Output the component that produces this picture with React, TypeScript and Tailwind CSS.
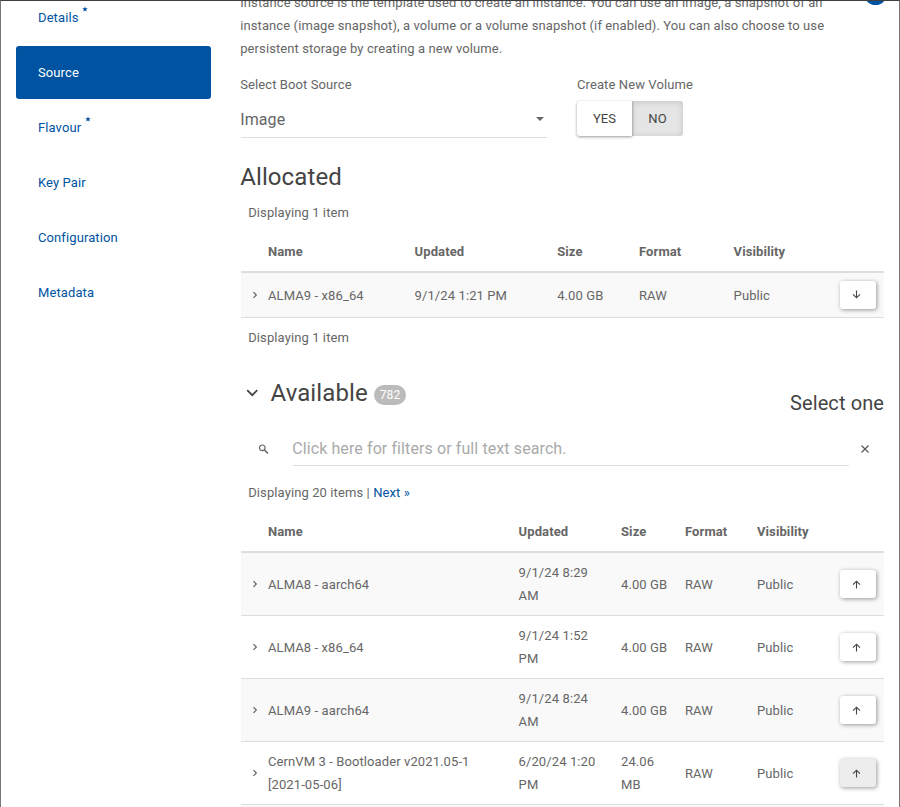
import React from "react";

const nav: [string, boolean][] = [["Details", true], ["Source", false], ["Flavour", true], ["Key Pair", false], ["Configuration", false], ["Metadata", false]];

const available = [
  { name: ["ALMA8 - aarch64"], updated: ["9/1/24 8:29", "AM"], size: ["4.00 GB"], hover: false },
  { name: ["ALMA8 - x86_64"], updated: ["9/1/24 1:52", "PM"], size: ["4.00 GB"], hover: false },
  { name: ["ALMA9 - aarch64"], updated: ["9/1/24 8:24", "AM"], size: ["4.00 GB"], hover: false },
  { name: ["CernVM 3 - Bootloader v2021.05-1", "[2021-05-06]"], updated: ["6/20/24 1:20", "PM"], size: ["24.06", "MB"], hover: true },
];

function Lines({ lines }: { lines: string[] }) {
  return <div className="whitespace-nowrap">{lines.map((l) => <div key={l}>{l}</div>)}</div>;
}

function Chevron() {
  return (
    <svg className="ml-[11px]" width="8" height="8" viewBox="0 0 8 8" fill="none" stroke="#666" strokeWidth="1.2">
      <path d="M1.5 1.2 4.3 4 1.5 6.8" />
    </svg>
  );
}

function RequiredStar() {
  return (
    <svg className="mb-[17px] ml-1" width="6" height="6" viewBox="0 0 6 6" fill="#0053a1">
      <path d="M3 .4 3.7 2.2 5.7 2.3 4.2 3.6 4.7 5.5 3 4.5 1.3 5.5 1.8 3.6.3 2.3 2.3 2.2Z" />
    </svg>
  );
}

function ArrowButton({ down, hover }: { down?: boolean; hover?: boolean }) {
  return (
    <button className={`flex h-7 w-9 items-center justify-center rounded-[3px] shadow-[1px_1px_4px_rgba(0,0,0,0.4)] ${hover ? "bg-[#ededed]" : "bg-white"}`}>
      <svg className={down ? "mr-[3px] mb-px rotate-180" : "mr-[3px]"} width="9" height="9" viewBox="0 0 9 9" fill="none" stroke="#444" strokeWidth="1.1">
        <path d="M4.5 8.4V1.2M1 4.7l3.5-3.5L8 4.7" />
      </svg>
    </button>
  );
}

export default function App() {
  return (
    <div className="relative flex h-[807px] w-[900px] overflow-hidden border-x border-t border-x-[#777] border-t-[#404040] bg-white font-[Roboto,sans-serif] text-[13px] leading-[23px] tracking-[0.1px] text-[#666]">
      <nav className="-mt-[10px] ml-[15px] flex w-[195px] shrink-0 flex-col gap-0.5">
        {nav.map(([label, star]) => (
          <div key={label} className={`flex h-[53px] items-center rounded-[3px] pl-[22px] ${label === "Source" ? "bg-[#0053a1] text-white" : "text-[#0053a1]"}`}>
            {label}{star && <RequiredStar />}
          </div>
        ))}
      </nav>
      <main className="-mt-[10px] ml-[30px] w-[643px] shrink-0">
        <p className="-ml-[0.8px] whitespace-nowrap">Instance source is the template used to create an instance. You can use an image, a snapshot of an<br />instance (image snapshot), a volume or a volume snapshot (if enabled). You can also choose to use<br />persistent storage by creating a new volume.</p>
        <div className="mt-[13px] flex h-[64px]">
          <div className="w-[306px]">
            <div className="-ml-[0.8px]">Select Boot Source</div>
            <div className="mt-[6px] flex h-[36px] items-center justify-between border-b border-[#ddd] text-base">
              <span className="-ml-[0.8px]">Image</span>
              <svg className="mr-[3px] mb-px" width="8" height="4" viewBox="0 0 8 4"><path d="M0 0h8L4 4z" fill="#666" /></svg>
            </div>
          </div>
          <div className="ml-[30px]">
            <div>Create New Volume</div>
            <div className="mt-[5px] flex h-[35px] w-[106px] text-[#444]">
              <div className="relative z-10 flex w-[55px] items-center justify-center rounded-l-[3px] bg-white shadow-[0_1px_3px_rgba(0,0,0,0.4)]">YES</div>
              <div className="flex flex-1 items-center justify-center rounded-r-[3px] bg-[#e5e5e5] shadow-[inset_0_1px_6px_rgba(0,0,0,0.15)]">NO</div>
            </div>
          </div>
        </div>
        <h2 className="mt-[27px] -ml-[0.8px] h-[26px] text-2xl leading-[26px] text-[#444]">Allocated</h2>
        <div className="mt-[11px] pl-[7.2px]">Displaying 1 item</div>
        <div className="mt-[8px] grid h-[41px] grid-cols-[27px_146.6px_142.6px_81.8px_94.6px_106.4px_44px] items-center border-b-2 border-[#ddd] font-bold">
          <span /><span>Name</span><span>Updated</span><span>Size</span><span>Format</span><span>Visibility</span>
        </div>
        <div className="grid h-[45px] grid-cols-[27px_146.6px_142.6px_81.8px_94.6px_106.4px_44px] items-center border-b border-[#ddd] bg-[#f9f9f9]">
          <Chevron /><span>ALMA9 - x86_64</span><span>9/1/24 1:21 PM</span><span>4.00 GB</span><span>RAW</span><span>Public</span><ArrowButton down />
        </div>
        <div className="mt-[8px] pl-[7.2px]">Displaying 1 item</div>
        <div className="mt-[30px] flex h-[38px] items-start justify-between text-[#444]">
          <h2 className="flex items-center text-2xl leading-[28px]">
            <svg className="mr-[12.5px] ml-[5px] mb-px" width="12" height="8" viewBox="0 0 12 8" fill="none" stroke="currentColor" strokeWidth="1.8"><path d="m1.2 1.2 5 5 5-5" /></svg>
            Available
            <span className="mt-1 ml-[6.3px] flex h-5 w-8 items-center justify-center rounded-[10px] bg-[#bbb] text-xs text-white">782</span>
          </h2>
          <span className="pt-[11px] text-xl leading-[26px]">Select one</span>
        </div>
        <div className="mt-[15px] flex h-[34px] items-center">
          <svg className="ml-[17px]" width="11" height="11" viewBox="0 0 11 11" fill="none" stroke="#666" strokeWidth="1.2"><circle cx="4.3" cy="3.8" r="2.8" /><path d="m6.4 5.9 3.6 3.7" strokeWidth="1.5" /></svg>
          <div className="ml-[24px] flex h-[34px] w-[556px] items-center border-b border-[#ddd] text-base text-[#aaa]"><span className="-ml-[0.8px]">Click here for filters or full text search.</span></div>
          <svg className="ml-3" width="8" height="8" viewBox="0 0 8 8" stroke="#555" strokeWidth="1.15"><path d="m.5.5 7 7m0-7-7 7" /></svg>
        </div>
        <div className="mt-[15px] pl-[7.2px]">Displaying 20 items | <span className="text-[#0053a1]">Next »</span></div>
        <div className="mt-[8px] grid h-[41px] grid-cols-[27px_250.6px_102.4px_64px_72px_83px_44px] items-center border-b-2 border-[#ddd] font-bold">
          <span /><span>Name</span><span>Updated</span><span>Size</span><span>Format</span><span>Visibility</span>
        </div>
        {available.map((r, i) => (
          <div key={r.name[0]} className={`grid h-[63px] grid-cols-[27px_250.6px_102.4px_64px_72px_83px_44px] items-center border-b border-[#ddd] ${i % 2 ? "bg-white" : "bg-[#f9f9f9]"}`}>
            <Chevron /><Lines lines={r.name} /><Lines lines={r.updated} /><Lines lines={r.size} /><span>RAW</span><span>Public</span><ArrowButton hover={r.hover} />
          </div>
        ))}
        <div className="h-3 bg-[#f9f9f9]" />
      </main>
      <div className="absolute -top-[19px] left-[863px] h-[23px] w-[23px] rounded-full bg-[#0053a1]" />
      <div className="absolute top-0 -left-px h-[52px] w-px bg-[#002a52]" />
      <div className="absolute top-0 -right-px h-[52px] w-px bg-[#002a52]" />
    </div>
  );
}
